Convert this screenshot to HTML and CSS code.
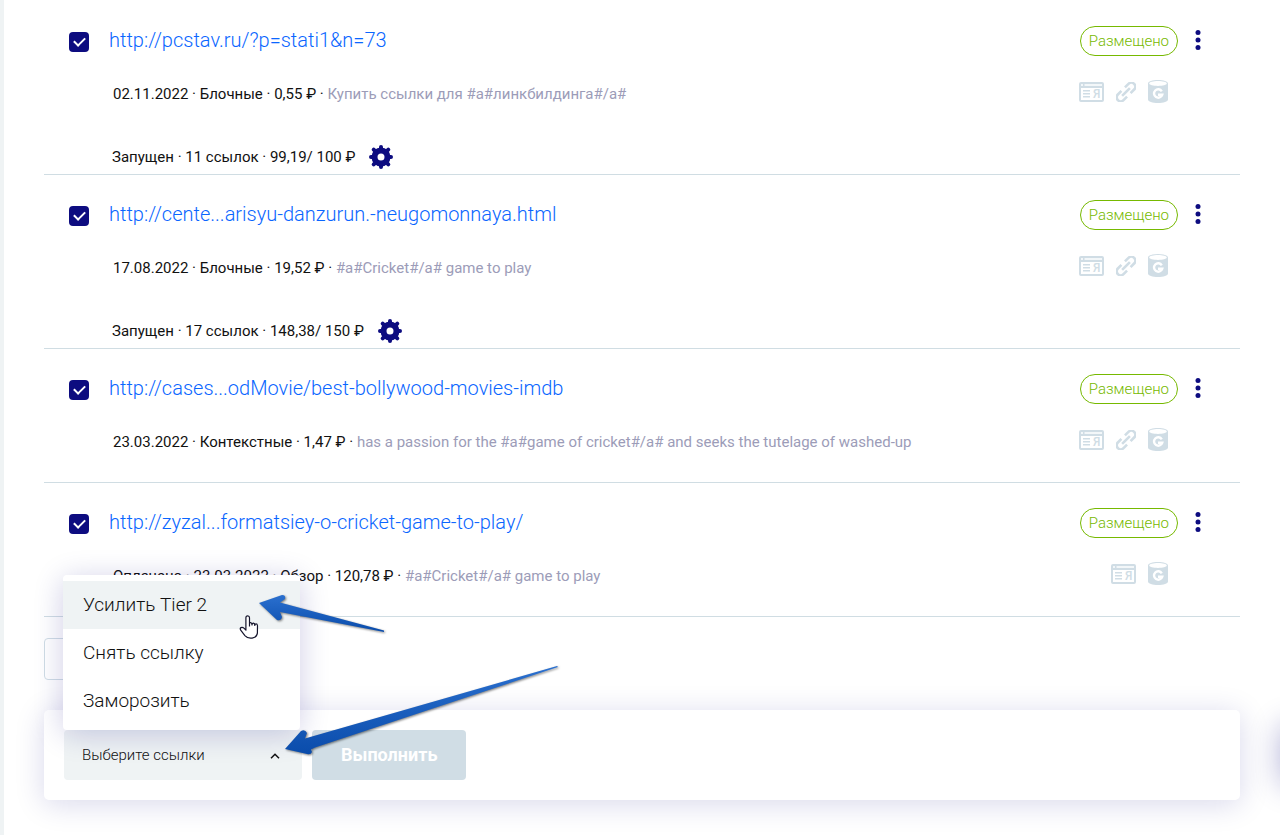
FILE: index.html
```html
<!DOCTYPE html>
<html lang="ru">
<head>
    <meta charset="UTF-8">
    <meta name="viewport" content="width=device-width, initial-scale=1.0">
    <title>Ссылки</title>
    <link rel="stylesheet" href="styles.css">
</head>
<body>
    <svg class="sprite" aria-hidden="true">
        <symbol id="icon-yandex" viewBox="0 0 25 20">
            <path fill-rule="evenodd" d="M2 0h21a2 2 0 0 1 2 2v16a2 2 0 0 1-2 2H2a2 2 0 0 1-2-2V2a2 2 0 0 1 2-2zM2 6v12h21V6zM2 2.300v1.400h2V2.300zM5.500 2.300v1.400H23V2.300z"/>
            <path d="M4 8h7v1.500H4zM4 11h7v1.500H4zM4 14h7v1.500H4z"/>
            <text x="14" y="16" font-size="12" font-weight="500">Я</text>
        </symbol>
        <symbol id="icon-link" viewBox="0 0 20 20">
            <g fill="none" stroke="currentColor" stroke-width="2.600" transform="rotate(-45 10 10)">
                <path d="M7.500 6H2.500a4 4 0 0 0 0 8h5"/>
                <path d="M12.500 6h5a4 4 0 0 1 0 8h-5"/>
                <path d="M4.500 10h11"/>
            </g>
        </symbol>
        <symbol id="icon-google" viewBox="0 0 20 23">
            <path fill-rule="evenodd" d="M0 3.500C0 1.500 4.500 0 10 0s10 1.500 10 3.500v16c0 2-4.500 3.500-10 3.500S0 21.500 0 19.500zM1.200 3.500c0 1.400 4 2.400 8.800 2.400s8.800-1 8.800-2.400S14.800 1.100 10 1.100 1.200 2.100 1.200 3.500z"/>
            <path fill="none" stroke="#fff" stroke-width="2.400" d="M13.800 11.300a4.200 4.200 0 1 0 .4 3.500H10"/>
        </symbol>
        <symbol id="icon-gear" viewBox="0 0 24 24">
            <path fill="none" stroke="currentColor" stroke-width="6" d="M12 5.500a6.500 6.500 0 1 1 0 13a6.500 6.500 0 1 1 0-13z"/>
            <path fill="none" stroke="currentColor" stroke-width="4" stroke-linecap="round" d="M12 2v3M12 19v3M2 12h3M19 12h3M4.700 4.700l2 2M17.300 17.300l2 2M4.700 19.300l2-2M17.300 6.700l2-2"/>
        </symbol>
        <symbol id="icon-dots" viewBox="0 0 6 20">
            <circle cx="3" cy="2.500" r="2.500"/>
            <circle cx="3" cy="10" r="2.500"/>
            <circle cx="3" cy="17.500" r="2.500"/>
        </symbol>
    </svg>

    <main class="page">
        <div class="links">
            <article class="link-row">
                <input class="check" type="checkbox" aria-label="Выбрать pcstav.ru" checked>
                <div class="info">
                    <a class="url" href="#">http://pcstav.ru/?p=stati1&amp;n=73</a>
                    <p class="meta">02.11.2022 · Блочные · 0,55 ₽ · <span class="anchor">Купить ссылки для #a#линкбилдинга#/a#</span></p>
                    <div class="tier">
                        <span>Запущен · 11 ссылок · 99,19/ 100 ₽</span>
                        <button class="gear" type="button" aria-label="Настройки"><svg><use href="#icon-gear"/></svg></button>
                    </div>
                </div>
                <div class="state">
                    <span class="badge">Размещено</span>
                    <div class="icons">
                        <svg class="ic-ya"><use href="#icon-yandex"/></svg>
                        <svg class="ic-link"><use href="#icon-link"/></svg>
                        <svg class="ic-g"><use href="#icon-google"/></svg>
                    </div>
                </div>
                <button class="more" type="button" aria-label="Ещё"><svg><use href="#icon-dots"/></svg></button>
            </article>

            <article class="link-row">
                <input class="check" type="checkbox" aria-label="Выбрать cente" checked>
                <div class="info">
                    <a class="url" href="#">http://cente...arisyu-danzurun.-neugomonnaya.html</a>
                    <p class="meta">17.08.2022 · Блочные · 19,52 ₽ · <span class="anchor">#a#Cricket#/a# game to play</span></p>
                    <div class="tier">
                        <span>Запущен · 17 ссылок · 148,38/ 150 ₽</span>
                        <button class="gear" type="button" aria-label="Настройки"><svg><use href="#icon-gear"/></svg></button>
                    </div>
                </div>
                <div class="state">
                    <span class="badge">Размещено</span>
                    <div class="icons">
                        <svg class="ic-ya"><use href="#icon-yandex"/></svg>
                        <svg class="ic-link"><use href="#icon-link"/></svg>
                        <svg class="ic-g"><use href="#icon-google"/></svg>
                    </div>
                </div>
                <button class="more" type="button" aria-label="Ещё"><svg><use href="#icon-dots"/></svg></button>
            </article>

            <article class="link-row short">
                <input class="check" type="checkbox" aria-label="Выбрать cases" checked>
                <div class="info">
                    <a class="url" href="#">http://cases...odMovie/best-bollywood-movies-imdb</a>
                    <p class="meta">23.03.2022 · Контекстные · 1,47 ₽ · <span class="anchor">has a passion for the #a#game of cricket#/a# and seeks the tutelage of washed-up</span></p>
                </div>
                <div class="state">
                    <span class="badge">Размещено</span>
                    <div class="icons">
                        <svg class="ic-ya"><use href="#icon-yandex"/></svg>
                        <svg class="ic-link"><use href="#icon-link"/></svg>
                        <svg class="ic-g"><use href="#icon-google"/></svg>
                    </div>
                </div>
                <button class="more" type="button" aria-label="Ещё"><svg><use href="#icon-dots"/></svg></button>
            </article>

            <article class="link-row short">
                <input class="check" type="checkbox" aria-label="Выбрать zyzal" checked>
                <div class="info">
                    <a class="url" href="#">http://zyzal...formatsiey-o-cricket-game-to-play/</a>
                    <p class="meta">Оплачено · 23.03.2022 · Обзор · 120,78 ₽ · <span class="anchor">#a#Cricket#/a# game to play</span></p>
                </div>
                <div class="state">
                    <span class="badge">Размещено</span>
                    <div class="icons">
                        <svg class="ic-ya"><use href="#icon-yandex"/></svg>
                        <svg class="ic-g"><use href="#icon-google"/></svg>
                    </div>
                </div>
                <button class="more" type="button" aria-label="Ещё"><svg><use href="#icon-dots"/></svg></button>
            </article>
        </div>

        <button class="pager" type="button" aria-label="Показать ещё"></button>

        <form class="actions">
            <div class="dropdown">
                <select class="select" aria-label="Действие">
                    <option>Выберите ссылки</option>
                </select>
                <svg class="chevron" viewBox="0 0 10 6"><path d="M1 5.200l4-4 4 4"/></svg>
                <div class="menu">
                    <button class="item active" type="button">Усилить Tier 2</button>
                    <button class="item" type="button">Снять ссылку</button>
                    <button class="item" type="button">Заморозить</button>
                </div>
            </div>
            <button class="submit" type="button">Выполнить</button>
        </form>
    </main>

    <div class="side-widget"></div>

    <!-- pointers over the menu -->
    <svg class="pointers" viewBox="0 0 310 160" aria-hidden="true">
        <defs>
            <linearGradient id="blue" x1="0" y1="0" x2="0" y2="1">
                <stop offset="0" stop-color="#2b70cf"/>
                <stop offset="1" stop-color="#0a4cab"/>
            </linearGradient>
        </defs>
        <g class="arrows" fill="url(#blue)">
            <path d="M8 39L31 31Q35 31 34 35L29 38.500L133 66.500L133 68L29 48L31 53Q30 57 26 56z"/>
            <path d="M34 185L50 167Q54 165 56 169L54 174.500L306 102L307 103L64 183.500L60 185.500L61 188Q60 191 56 190z"/>
        </g>
        <path class="cursor" d="M-1.500 62.500v-8.700c0-2.600-3.600-2.600-3.600 0v12.400l-2-2c-2-2-4.600-.2-3.200 2l4.200 5.400c3.500 4 11.600 3.500 12.500-2.500l.1-7.400c-.3-2.400-2.600-2.200-2.700-.2 0-3-2.800-3-2.800-.6 0-3-2.500-3-2.500-.8"/>
    </svg>
</body>
</html>
```

FILE: styles.css
```css
* {
    box-sizing: border-box;
}

body {
    margin: 0;
    min-height: 100vh;
    border-left: 4px solid #eff3f4;
    background: #fff;
    color: #111;
    font-family: Roboto, "Liberation Sans", sans-serif;
    font-weight: 300;
    font-size: 15px;
    line-height: 20px;
}

button, select {
    font: inherit;
    color: inherit;
    border: none;
    padding: 0;
    cursor: pointer;
}

svg {
    fill: currentColor;
}

.sprite {
    display: none;
}

.page {
    padding: 1px 40px 35px;
}

.link-row {
    display: grid;
    grid-template-columns: 20px 1fr auto 30px;
    align-items: start;
    padding: 25px 32px 5px 25px;
    border-bottom: 1px solid #d0dde3;
}

.link-row.short {
    padding-bottom: 30px;
}

.check {
    appearance: none;
    display: grid;
    place-items: center;
    width: 20px;
    height: 20px;
    margin: 6px 0 0;
    border-radius: 4px;
    background: #0d0c80;
}

.check:checked::after {
    content: "";
    width: 5px;
    height: 9px;
    margin-bottom: 3px;
    border: solid #fff;
    border-width: 0 2px 2px 0;
    transform: rotate(45deg);
}

.info {
    padding-left: 20px;
}

.url {
    display: block;
    width: fit-content;
    font-size: 20px;
    line-height: 28px;
    color: #0a66ff;
    text-decoration: none;
}

.meta {
    margin: 30px 0 0;
    padding-left: 4px;
    font-weight: 400;
}

.anchor {
    color: #9c9cb8;
}

.tier {
    display: flex;
    align-items: center;
    gap: 14px;
    margin-top: 41px;
    padding-left: 3px;
    font-weight: 400;
}

.gear {
    width: 24px;
    height: 24px;
    background: none;
    color: #0d0c80;
}

.gear svg, .more svg {
    display: block;
    width: 100%;
    height: 100%;
}

.state {
    display: flex;
    flex-direction: column;
    align-items: flex-end;
    gap: 24px;
}

.badge {
    padding: 4px 8px;
    border: 1px solid #76b900;
    border-radius: 15px;
    color: #76b900;
}

.icons {
    display: flex;
    align-items: center;
    gap: 12px;
    padding-right: 10px;
    color: #d0dde5;
}

.ic-ya {
    width: 25px;
    height: 20px;
}

.ic-link {
    width: 20px;
    height: 20px;
}

.ic-g {
    width: 20px;
    height: 23px;
}

.more {
    justify-self: end;
    width: 6px;
    height: 20px;
    margin: 4px 7px 0 0;
    background: none;
    color: #0d0c80;
}

.pager {
    display: block;
    width: 120px;
    height: 42px;
    margin: 21px 0 30px;
    border: 1px solid #d0dde5;
    border-radius: 4px;
    background: #fff;
}

.actions {
    display: flex;
    gap: 10px;
    padding: 20px;
    border-radius: 5px;
    background: #fff;
    box-shadow: 0 4px 30px rgba(13, 12, 128, 0.16);
}

.dropdown {
    position: relative;
    width: 238px;
}

.select {
    appearance: none;
    width: 100%;
    height: 50px;
    padding: 0 18px;
    border-radius: 4px;
    background: #eff3f4;
}

.chevron {
    position: absolute;
    top: 23px;
    right: 22px;
    width: 10px;
    height: 6px;
    fill: none;
    stroke: #111;
    stroke-width: 1.500;
}

.menu {
    position: absolute;
    right: 2px;
    bottom: 100%;
    width: 237px;
    padding: 6px 0 5px;
    border-radius: 4px;
    background: #fff;
    box-shadow: 0 4px 30px rgba(13, 12, 128, 0.2);
}

.item {
    display: block;
    width: 100%;
    height: 48px;
    padding: 0 20px;
    background: none;
    font-size: 19px;
    text-align: left;
}

.item.active {
    background: #eff3f4;
}

.submit {
    height: 50px;
    padding: 0 29px;
    border-radius: 4px;
    background: #d0dde5;
    color: #fff;
    font-size: 18px;
    font-weight: 700;
}

/* floating widget waits just past the right edge */
.side-widget {
    position: fixed;
    left: 100%;
    top: 725px;
    width: 60px;
    height: 60px;
    border-radius: 5px;
    box-shadow: 0 0 30px rgba(13, 12, 128, 0.3);
}

.pointers {
    position: absolute;
    left: 251px;
    top: 564px;
    width: 310px;
    height: 160px;
    overflow: visible;
    pointer-events: none;
}

.arrows {
    filter: drop-shadow(1px 1px 1px rgba(0, 0, 0, 0.5));
}

.cursor {
    fill: #fff;
    stroke: #14142b;
    stroke-width: 1.200;
    stroke-linejoin: round;
}
```
